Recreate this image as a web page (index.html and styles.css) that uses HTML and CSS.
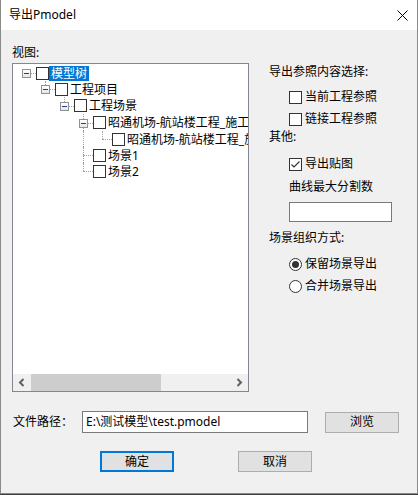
FILE: index.html
```html
<!DOCTYPE html>
<html lang="zh-CN">
<head>
<meta charset="utf-8">
<title>导出Pmodel</title>
<link rel="stylesheet" href="styles.css">
</head>
<body>
<div class="window">
  <div class="titlebar">
    <span class="title">导出Pmodel</span>
    <svg class="close" width="11" height="11" viewBox="0 0 11 11"><path d="M0.5 0.5 L10.5 10.5 M10.5 0.5 L0.5 10.5" stroke="#000" stroke-width="1" fill="none"/></svg>
  </div>
  <div class="content">
    <div class="main">
      <div class="tree-col">
        <div class="view-label">视图:</div>
        <div class="tree">
          <div class="tree-items">
            <div class="row">
              <span class="cell h"><span class="exp"></span></span>
              <span class="cb"></span><span class="label sel">模型树</span>
            </div>
            <div class="row">
              <span class="cell"></span>
              <span class="cell v half h"><span class="exp"></span></span>
              <span class="cb"></span><span class="label">工程项目</span>
            </div>
            <div class="row tall">
              <span class="cell"></span><span class="cell"></span>
              <span class="cell v half h"><span class="exp"></span></span>
              <span class="cb"></span><span class="label">工程场景</span>
            </div>
            <div class="row tall">
              <span class="cell"></span><span class="cell"></span><span class="cell"></span>
              <span class="cell v h"><span class="exp"></span></span>
              <span class="cb"></span><span class="label">昭通机场-航站楼工程_施工图</span>
            </div>
            <div class="row">
              <span class="cell"></span><span class="cell"></span><span class="cell"></span>
              <span class="cell v"></span>
              <span class="cell v half h"></span>
              <span class="cb"></span><span class="label">昭通机场-航站楼工程_施工图</span>
            </div>
            <div class="row">
              <span class="cell"></span><span class="cell"></span><span class="cell"></span>
              <span class="cell v h"></span>
              <span class="cb"></span><span class="label">场景1</span>
            </div>
            <div class="row">
              <span class="cell"></span><span class="cell"></span><span class="cell"></span>
              <span class="cell v half h"></span>
              <span class="cb"></span><span class="label">场景2</span>
            </div>
          </div>
          <div class="hscroll">
            <span class="arrow"><svg width="8" height="9" viewBox="0 0 8 9"><path d="M5.5 1 L2 4.5 L5.5 8" stroke="#606060" stroke-width="2" fill="none"/></svg></span>
            <span class="thumb"></span>
            <span class="track"></span>
            <span class="arrow"><svg width="8" height="9" viewBox="0 0 8 9"><path d="M2.5 1 L6 4.5 L2.5 8" stroke="#606060" stroke-width="2" fill="none"/></svg></span>
          </div>
        </div>
      </div>
      <div class="right-col">
        <div class="r-label">导出参照内容选择:</div>
        <div class="r-check gap9"><span class="cb"></span>当前工程参照</div>
        <div class="r-check gap6"><span class="cb"></span>链接工程参照</div>
        <div class="r-label gap2">其他:</div>
        <div class="r-check gap11"><span class="cb"><svg width="11" height="11" viewBox="0 0 11 11"><path d="M1.5 5.5 L4 8 L9.5 2.5" stroke="#333" stroke-width="1.2" fill="none"/></svg></span>导出贴图</div>
        <div class="r-label indent gap7">曲线最大分割数</div>
        <div class="r-input"></div>
        <div class="r-label gap8">场景组织方式:</div>
        <div class="r-check gap10"><svg class="radio" width="13" height="13" viewBox="0 0 13 13"><circle cx="6.5" cy="6.5" r="6" fill="#fff" stroke="#333"/><circle cx="6.5" cy="6.5" r="3.5" fill="#333"/></svg>保留场景导出</div>
        <div class="r-check gap6"><svg class="radio" width="13" height="13" viewBox="0 0 13 13"><circle cx="6.5" cy="6.5" r="6" fill="#fff" stroke="#333"/></svg>合并场景导出</div>
      </div>
    </div>
    <div class="path-row">
      <span class="path-label">文件路径：</span>
      <div class="path-input">E:\测试模型\test.pmodel</div>
      <button class="btn browse">浏览</button>
    </div>
    <div class="btn-row">
      <button class="btn ok">确定</button>
      <button class="btn cancel">取消</button>
    </div>
  </div>
</div>
</body>
</html>
```
FILE: styles.css
```css
* { box-sizing: border-box; margin: 0; padding: 0; }
html, body { margin: 0; }
body {
  background: #3c3c3c;
  font-family: "Noto Sans", "Noto Sans CJK SC", sans-serif;
  font-size: 12px;
  color: #000;
}
.window {
  width: 418px;
  height: 494px;
  background: #f0f0f0;
  border: 1px solid #8a8a8a;
  border-top: none;
  display: flex;
  flex-direction: column;
}
.titlebar {
  height: 30px;
  background: #fff;
  display: flex;
  align-items: center;
  justify-content: space-between;
  padding: 0 9px 0 8px;
  flex: none;
}
.title { line-height: 16px; }
.close { display: block; }

.content { padding: 15px 0 0 11px; }
.main { display: flex; }
.view-label { height: 16px; line-height: 16px; }

.tree {
  margin-top: 2px;
  width: 237px;
  height: 329px;
  border: 1px solid #828790;
  background: #fff;
  display: flex;
  flex-direction: column;
  overflow: hidden;
}
.tree-items {
  flex: 1;
  padding: 1px 0 0 4px;
  overflow: hidden;
}
.row {
  display: flex;
  align-items: center;
  height: 16px;
  white-space: nowrap;
}
.row.tall { height: 17px; }
.cell {
  width: 19px;
  height: 100%;
  flex: none;
  position: relative;
}
.cell.v::before {
  content: "";
  position: absolute;
  left: 9px;
  top: 0;
  bottom: 0;
  border-left: 1px dotted #a0a0a0;
}
.cell.v.half::before { bottom: 50%; }
.cell.h::after {
  content: "";
  position: absolute;
  left: 9px;
  right: 0;
  top: 50%;
  border-top: 1px dotted #a0a0a0;
}
.exp {
  position: absolute;
  left: 5px;
  top: 50%;
  margin-top: -4px;
  width: 9px;
  height: 9px;
  border: 1px solid #919191;
  background: linear-gradient(#fff, #e6e6e6);
  z-index: 1;
}
.exp::after {
  content: "";
  position: absolute;
  left: 1px;
  top: 3px;
  width: 5px;
  height: 1px;
  background: #1f3f8f;
}
.cb {
  width: 13px;
  height: 13px;
  border: 1px solid #333;
  background: #fff;
  flex: none;
  display: flex;
  align-items: center;
  justify-content: center;
}
.cb svg { display: block; }
.label {
  line-height: 15px;
  padding: 0 2px;
}
.label.sel {
  background: #0078d7;
  color: #fff;
}
.hscroll {
  height: 17px;
  flex: none;
  display: flex;
  background: #f0f0f0;
}
.arrow {
  width: 18px;
  display: flex;
  align-items: center;
  justify-content: center;
  flex: none;
}
.arrow svg { display: block; }
.thumb { width: 130px; background: #cdcdcd; flex: none; }
.track { flex: 1; }

.right-col {
  margin-left: 20px;
  padding-top: 19px;
  display: flex;
  flex-direction: column;
}
.r-label { height: 16px; line-height: 16px; white-space: nowrap; }
.r-label.indent { margin-left: 20px; }
.r-check {
  height: 16px;
  line-height: 16px;
  margin-left: 20px;
  display: flex;
  align-items: center;
  gap: 3px;
  white-space: nowrap;
}
.radio { display: block; flex: none; }
.gap2 { margin-top: 2px; }
.gap6 { margin-top: 6px; }
.gap7 { margin-top: 7px; }
.gap8 { margin-top: 8px; }
.gap9 { margin-top: 9px; }
.gap10 { margin-top: 10px; }
.gap11 { margin-top: 11px; }
.r-input {
  margin: 7px 0 0 20px;
  width: 103px;
  height: 20px;
  border: 1px solid #7a7a7a;
  background: #fff;
}

.path-row {
  margin-top: 19px;
  display: flex;
  align-items: center;
  height: 22px;
}
.path-label { width: 70px; padding-left: 1px; line-height: 16px; }
.path-input {
  width: 226px;
  height: 22px;
  border: 1px solid #7a7a7a;
  background: #fff;
  padding-left: 3px;
  line-height: 20px;
  white-space: nowrap;
}
.btn {
  font-family: inherit;
  font-size: 12px;
  color: #000;
  width: 74px;
  background: #e1e1e1;
  border: 1px solid #adadad;
  line-height: 16px;
  text-align: center;
}
.browse { margin-left: 17px; height: 21px; }
.btn-row {
  margin-top: 18px;
  padding-left: 88px;
  display: flex;
}
.ok { height: 21px; border: 2px solid #0078d7; }
.cancel { height: 21px; margin-left: 64px; }
```
